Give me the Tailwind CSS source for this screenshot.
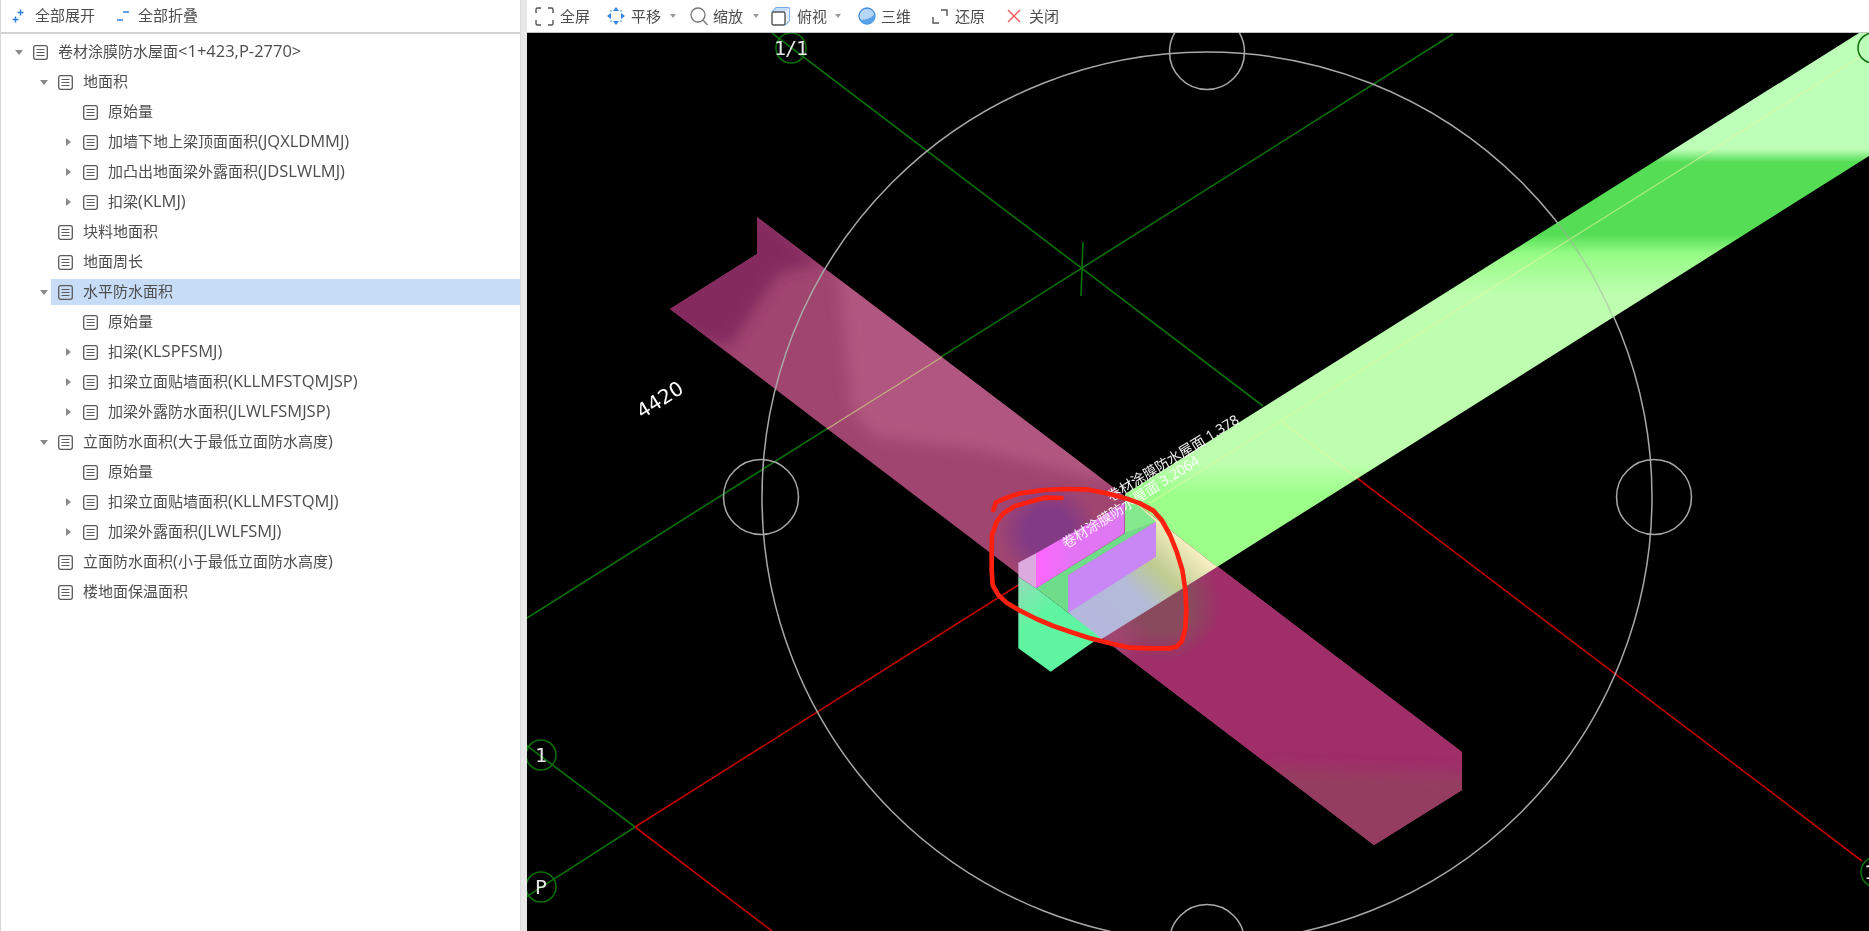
<!DOCTYPE html>
<html lang="en">
<head>
    <meta charset="UTF-8">
    <title>卷材涂膜防水屋面</title>
    <script src="https://cdn.jsdelivr.net/npm/@tailwindcss/browser@4"></script>
</head>
<body class="bg-white overflow-hidden">
<div class="flex h-[931px] w-[1869px] blur-[0.4px] text-[15px] leading-none text-[#4d4d4d] font-['Open_Sans','Noto_Sans_CJK_SC',sans-serif]">

    <!-- Left: calculation tree -->
    <div class="w-[520px] shrink-0 border-l border-[#d9d9d9] flex flex-col">
        <div class="h-[34px] shrink-0 border-b-2 border-[#d2d2d2] flex items-center">
            <svg class="w-[12px] h-[14px] ml-[11px]" viewBox="0 0 12 14" fill="none" stroke="#2f7fe0" stroke-width="1.5"><path d="M8.5 0.5v6M5.5 3.5h6M3.5 7.5v6M0.5 10.5h6"/></svg>
            <span class="ml-[11px] mb-[1px]">全部展开</span>
            <svg class="w-[12px] h-[14px] ml-[22px]" viewBox="0 0 12 14" fill="none" stroke="#2f7fe0" stroke-width="1.5"><path d="M6 3h6M0 11h6"/></svg>
            <span class="ml-[9px] mb-[1px]">全部折叠</span>
        </div>
        <div id="tree" class="pt-[3px]"></div>
    </div>
    <div class="w-[7px] shrink-0 bg-[#e8e8e8] border-l border-[#dcdcdc]"></div>

    <!-- Right: 3D view -->
    <div class="flex-1 flex flex-col min-w-0">
        <div class="h-[33px] shrink-0 border-b border-[#c4c4c4] flex items-center">
            <svg class="w-[19px] h-[19px] ml-[8px]" viewBox="0 0 19 19" fill="none" stroke="#555" stroke-width="1.4"><path d="M6 1H2.5A1.5 1.5 0 0 0 1 2.5V6M13 1h3.500A1.500 1.500 0 0 1 18 2.500V6M1 13v3.500A1.500 1.500 0 0 0 2.500 18H6M18 13v3.500a1.500 1.500 0 0 1-1.500 1.500H13"/></svg>
            <span class="ml-[6px]">全屏</span>
            <svg class="w-[18px] h-[18px] ml-[17px]" viewBox="0 0 18 18" fill="#2f86e6"><path d="M9 0l3 4H6zM9 18l-3-4h6zM0 9l4-3v6zM18 9l-4 3V6z"/><circle cx="4" cy="4" r="0.800"/><circle cx="14" cy="4" r="0.800"/><circle cx="4" cy="14" r="0.800"/><circle cx="14" cy="14" r="0.800"/></svg>
            <span class="ml-[6px]">平移</span>
            <svg class="w-[6px] h-[4px] ml-[9px]" viewBox="0 0 6 4" fill="#999"><path d="M0 0h6L3 4z"/></svg>
            <svg class="w-[18px] h-[19px] ml-[14px]" viewBox="0 0 18 19" fill="none" stroke="#777" stroke-width="1.3"><circle cx="8" cy="8" r="7"/><path d="M13 13l4.500 5"/></svg>
            <span class="ml-[5px]">缩放</span>
            <svg class="w-[6px] h-[4px] ml-[10px]" viewBox="0 0 6 4" fill="#999"><path d="M0 0h6L3 4z"/></svg>
            <svg class="w-[19px] h-[19px] ml-[12px]" viewBox="0 0 19 19" fill="none"><path d="M1 5l4-4h13v13l-4 4" stroke="#4a90e2" stroke-width="1.300"/><path d="M5 1l-4 4h13l4-4z" fill="#c4def7"/><path d="M14 5l4-4v13l-4 4z" fill="#e2eefa"/><rect x="1" y="5" width="13" height="13" rx="1.500" stroke="#555" stroke-width="1.400"/></svg>
            <span class="ml-[7px]">俯视</span>
            <svg class="w-[6px] h-[4px] ml-[8px]" viewBox="0 0 6 4" fill="#999"><path d="M0 0h6L3 4z"/></svg>
            <svg class="w-[18px] h-[18px] ml-[17px]" viewBox="0 0 18 18"><circle cx="9" cy="9" r="8" fill="#b7d5f5" stroke="#3f8ee6" stroke-width="1.300"/><path d="M2 12.500c3.500 1 10-.5 14.500-5l.5 2.500a8 8 0 0 1-15 2.500z" fill="#5a9fe9"/></svg>
            <span class="ml-[5px]">三维</span>
            <svg class="w-[16px] h-[15px] ml-[21px]" viewBox="0 0 16 15" fill="none" stroke="#555" stroke-width="1.400"><path d="M1 8v6h6M9 1h6v6"/></svg>
            <span class="ml-[7px]">还原</span>
            <svg class="w-[14px] h-[14px] ml-[22px]" viewBox="0 0 14 14" fill="none" stroke="#f26060" stroke-width="1.500"><path d="M1 1l12 12M13 1L1 13"/></svg>
            <span class="ml-[8px]">关闭</span>
        </div>

        <div class="flex-1 bg-black min-h-0">
            <svg class="block w-full h-full" viewBox="527 33 1342 898">
                <defs>
                    <clipPath id="pinkClip"><polygon points="757,217 1462,752 1462,790 1374,845 670,309 757,254"/></clipPath>
                    <filter id="soft" x="-20%" y="-20%" width="140%" height="140%"><feGaussianBlur stdDeviation="7"/></filter>
                    <linearGradient id="greenBeam" gradientUnits="userSpaceOnUse" x1="0" y1="33" x2="0" y2="600">
                        <stop offset="0.205" stop-color="#bdffb9"/>
                        <stop offset="0.228" stop-color="#55dd55"/>
                        <stop offset="0.355" stop-color="#55dd55"/>
                        <stop offset="0.39" stop-color="#96fc86"/>
                        <stop offset="0.46" stop-color="#bdffae"/>
                        <stop offset="0.76" stop-color="#bdffae"/>
                        <stop offset="0.815" stop-color="#9cff8a"/>
                    </linearGradient>
                    <linearGradient id="cross" gradientUnits="userSpaceOnUse" x1="480" y1="620" x2="730" y2="360">
                        <stop offset="0" stop-color="#b4b8dc"/>
                        <stop offset="0.35" stop-color="#b4bcd8"/>
                        <stop offset="0.62" stop-color="#bdcb90"/>
                        <stop offset="1" stop-color="#fff3c8"/>
                    </linearGradient>
                    <linearGradient id="magenta" gradientUnits="userSpaceOnUse" x1="258" y1="0" x2="523" y2="0">
                        <stop offset="0" stop-color="#ff66ff"/>
                        <stop offset="0.4" stop-color="#e474f5"/>
                        <stop offset="1" stop-color="#de78f2"/>
                    </linearGradient>
                    <linearGradient id="mint" gradientUnits="userSpaceOnUse" x1="205" y1="480" x2="340" y2="640">
                        <stop offset="0" stop-color="#93dcb8"/>
                        <stop offset="0.6" stop-color="#5ff5a0"/>
                        <stop offset="1" stop-color="#5ff5a0"/>
                    </linearGradient>
                    <radialGradient id="purpleGlow" gradientUnits="userSpaceOnUse" cx="1048" cy="532" r="50">
                        <stop offset="0.45" stop-color="#823a85"/>
                        <stop offset="1" stop-color="#823a85" stop-opacity="0"/>
                    </radialGradient>
                    <radialGradient id="oliveGlow" gradientUnits="userSpaceOnUse" cx="1165" cy="605" r="55">
                        <stop offset="0.5" stop-color="#8a4a5e"/>
                        <stop offset="1" stop-color="#8a4a5e" stop-opacity="0"/>
                    </radialGradient>
                </defs>

                <!-- axis lines -->
                <g fill="none" stroke-width="1.600">
                    <path d="M772 33L1263 406M527 618L1453 34M526 745L635 827M526 897L635 827M1083 242L1081 296" stroke="#0a700a"/>
                    <path d="M635 827L772 931M635 827L1020 584M1357 478L1862 861" stroke="#c00000"/>
                </g>

                <!-- pink beam -->
                <g clip-path="url(#pinkClip)">
                    <rect x="650" y="200" width="830" height="660" fill="#a04570"/>
                    <polygon points="740,190 820,263 780,273 760,300 730,347 640,330 640,260" fill="#842a5e" filter="url(#soft)"/>
                    <polygon points="838,260 960,340 1130,470 1100,480 980,450 875,437 853,413 847,360" fill="#b15780" filter="url(#soft)"/>
                    <polygon points="1230,540 1500,730 1500,810 1374,870 1110,670" fill="#9f2f69" filter="url(#soft)"/>
                    <polygon points="1270,768 1500,775 1500,810 1374,880 1290,810" fill="#953d60" filter="url(#soft)"/>
                    <rect x="980" y="465" width="120" height="120" fill="url(#purpleGlow)"/>
                    <rect x="1100" y="540" width="140" height="140" fill="url(#oliveGlow)"/>
                </g>
                <path d="M942 357L827 429" stroke="#c2b07e" stroke-width="1.200"/>

                <!-- circles -->
                <g fill="none" stroke="#a8a8a8" stroke-width="1.500">
                    <circle cx="1207" cy="497" r="445"/>
                    <circle cx="761" cy="497" r="37.500"/>
                    <circle cx="1654" cy="497" r="37.500"/>
                    <circle cx="1207" cy="52" r="37.500"/>
                    <circle cx="1207" cy="942" r="37.500"/>
                </g>

                <!-- green beam -->
                <polygon points="1125,494 1859,33 1869,33 1869,156 1217,567" fill="url(#greenBeam)"/>
                <path d="M1860 57L1150 503M1282 422L1357 478" stroke="#eaf5a0" stroke-opacity="0.6" stroke-width="1.200"/>
                <path d="M1558 223A445 445 0 0 1 1613 317" fill="none" stroke="#a8a8a8" stroke-opacity="0.5" stroke-width="1.500"/>

                <!-- wall junction, in units of a third of a pixel -->
                <g transform="translate(950 420) scale(.33333)">
                    <polygon points="525,222 801,441 450,660 355,578 355,465 618,305 525,340" fill="url(#cross)"/>
                    <polygon points="525,222 618,305 525,340" fill="#84e88c"/>
                    <polygon points="258,505 525,340 618,305 355,465 355,578" fill="#6fdc8a"/>
                    <polygon points="205,470 258,505 355,578 450,652 302,755 205,685" fill="url(#mint)"/>
                    <polygon points="205,428 258,400 258,505 205,470" fill="#dcaade"/>
                    <polygon points="258,400 523,250 523,340 258,505" fill="url(#magenta)"/>
                    <polygon points="355,465 618,305 618,410 355,578" fill="#c987f5"/>
                </g>

                <!-- axis bubbles -->
                <g fill="none" stroke="#0a700a" stroke-width="1.500">
                    <circle cx="791" cy="48" r="15"/>
                    <circle cx="541" cy="755" r="15"/>
                    <circle cx="541" cy="887" r="15"/>
                    <circle cx="1873" cy="48" r="15"/>
                    <circle cx="1876" cy="872" r="15"/>
                </g>
                <g fill="#e6e6e6" font-size="20" text-anchor="middle" class="font-['DejaVu_Sans_Mono',monospace]">
                    <text x="791" y="55" textLength="34">1/1</text>
                    <text x="541" y="762">1</text>
                    <text x="541" y="894">P</text>
                    <text x="1870" y="879">1</text>
                </g>

                <!-- labels -->
                <text transform="translate(642 419) rotate(-32)" fill="#fff" font-size="20" class="font-['DejaVu_Sans',sans-serif]">4420</text>
                <g font-size="14" class="font-['Noto_Sans','Noto_Sans_CJK_SC',sans-serif]">
                    <text transform="translate(1111 502) rotate(-31.600)" fill="#f0f0f0">卷材涂膜防水屋面 1.378</text>
                    <text transform="translate(1066 549) rotate(-32.500)" fill="#fff" fill-opacity="0.9">卷材涂膜防水屋面 3.2064</text>
                </g>

                <!-- hand-drawn marking -->
                <g transform="translate(950 420) scale(.33333)">
                    <polyline fill="none" stroke="#ff2010" stroke-width="14" stroke-linecap="round" stroke-linejoin="round" points="130,270 138,247 170,233 210,220 280,210 340,207 410,208 480,222 530,236 570,250 610,272 635,300 660,345 680,395 697,450 706,510 709,570 706,625 695,665 680,680 660,685 600,685 540,683 480,670 420,655 360,635 310,618 260,597 210,572 170,548 145,525 128,495 125,450 125,390 126,345 140,305 160,280 195,258 240,245 285,233 335,234"/>
                </g>
            </svg>
        </div>
    </div>
</div>

<script>
    // [level, arrow, label, selected]
    const rows = [
        [0, 'down', '卷材涂膜防水屋面<1+423,P-2770>'],
        [1, 'down', '地面积'],
        [2, '', '原始量'],
        [2, 'right', '加墙下地上梁顶面面积(JQXLDMMJ)'],
        [2, 'right', '加凸出地面梁外露面积(JDSLWLMJ)'],
        [2, 'right', '扣梁(KLMJ)'],
        [1, '', '块料地面积'],
        [1, '', '地面周长'],
        [1, 'down', '水平防水面积', true],
        [2, '', '原始量'],
        [2, 'right', '扣梁(KLSPFSMJ)'],
        [2, 'right', '扣梁立面贴墙面积(KLLMFSTQMJSP)'],
        [2, 'right', '加梁外露防水面积(JLWLFSMJSP)'],
        [1, 'down', '立面防水面积(大于最低立面防水高度)'],
        [2, '', '原始量'],
        [2, 'right', '扣梁立面贴墙面积(KLLMFSTQMJ)'],
        [2, 'right', '加梁外露面积(JLWLFSMJ)'],
        [1, '', '立面防水面积(小于最低立面防水高度)'],
        [1, '', '楼地面保温面积'],
    ];

    const arrows = {
        down: '<svg class="w-[8px] h-[5px]" viewBox="0 0 8 5" fill="#8a8a8a"><path d="M0 0h8L4 5z"/></svg>',
        right: '<svg class="w-[5px] h-[8px]" viewBox="0 0 5 8" fill="#8a8a8a"><path d="M0 0v8l5-4z"/></svg>',
        '': '',
    };
    const docIcon = '<svg class="w-[15px] h-[15px] shrink-0" viewBox="0 0 15 15" fill="none" stroke="#5a5a5a"><rect x="0.700" y="0.700" width="13.600" height="13.600" rx="2" stroke-width="1.300"/><path d="M3.500 4.500h8M3.500 7.500h8M3.500 10.500h8" stroke-width="1.200"/></svg>';

    // latin runs sit wider than the CJK font's metrics at this size
    const fmt = (label) => label.replace(/[\x21-\x7e]+/g, (run) =>
        `<span class="text-[16.5px]">${run.replace('<', '&lt;').replace('>', '&gt;')}</span>`);

    document.getElementById('tree').innerHTML = rows.map(([level, arrow, label, selected]) => `
        <div class="h-[30px] flex items-center" style="padding-left:${10 + 25 * level}px">
            <span class="w-[15px] shrink-0 flex justify-center">${arrows[arrow]}</span>
            <div class="flex-1 h-[26px] pl-[7px] flex items-center ${selected ? 'bg-[#c6dcf7]' : ''}">
                ${docIcon}
                <span class="ml-[10px] mb-[1px] whitespace-nowrap">${fmt(label)}</span>
            </div>
        </div>
    `).join('');
</script>
</body>
</html>
